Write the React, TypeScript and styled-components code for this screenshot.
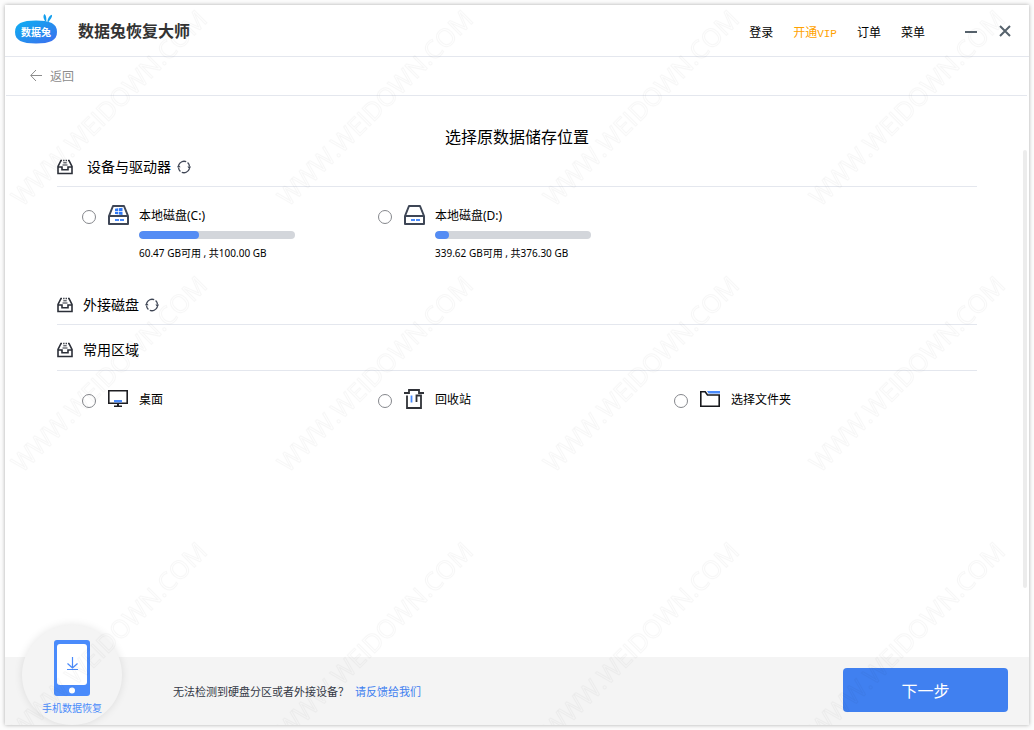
import React from "react";
import styled, { createGlobalStyle } from "styled-components";

const ui = `"Noto Sans", "Noto Sans CJK SC", sans-serif`;
const cjk = `"Noto Sans CJK SC", sans-serif`;
const line = "#e4e7ee";
const blue = "#4a8bfb";

const GlobalStyle = createGlobalStyle`
  *, *::before, *::after { box-sizing: border-box; }
  body { margin: 0; background: #fcfcfc; font-family: ${cjk}; color: #000; }
  h1, h2, p { margin: 0; font-weight: 400; }
  button { font: inherit; border: 0; padding: 0; background: none; color: inherit; cursor: pointer; }
  svg { display: block; flex: none; }
`;

const Page = styled.div`
  display: flex;
  min-height: 100vh;
  padding: 5px;
`;

const Window = styled.div`
  position: relative;
  flex: 1;
  display: flex;
  flex-direction: column;
  overflow: hidden;
  background: #fff;
`;

const Frame = styled.div`
  flex: 1;
  display: flex;
  box-shadow: 0 0 4px rgba(0, 0, 0, 0.32);
`;

const Header = styled.header`
  display: flex;
  align-items: center;
  height: 52px;
  padding: 0 18px 2px 9px;
  border-bottom: 1px solid ${line};
`;

const AppName = styled.h1`
  margin-left: 20px;
  font-size: 16px;
  line-height: 24px;
  font-weight: 700;
  color: #333;
`;

const Menu = styled.nav`
  display: flex;
  gap: 20px;
  margin: 4px 40px 0 auto;
`;

const MenuButton = styled.button<{ $vip?: boolean }>`
  font-size: 12px;
  line-height: 18px;
  color: ${(p) => (p.$vip ? "#ffa200" : "#000")};
`;

const Mono = styled.span`
  font-family: "Liberation Mono", monospace;
  font-size: 11px;
  line-height: 12px;
`;

const WindowControls = styled.div`
  display: flex;
  gap: 22px;
  margin-top: 2px;
`;

const BackBar = styled.div`
  display: flex;
  align-items: center;
  height: 39px;
  margin: 0 2px 0 1px;
  padding-left: 24px;
  border-bottom: 1px solid ${line};
`;

const BackButton = styled.button`
  display: flex;
  align-items: center;
  gap: 8px;
  font-size: 12px;
  line-height: 18px;
  color: #8c8c8c;
`;

const Main = styled.main`
  flex: 1;
  display: flex;
`;

const Content = styled.div`
  flex: 1;
  padding: 30px 46px 0 52px;
`;

const ScrollThumb = styled.div`
  width: 4px;
  margin: 54px 2px 69px 0;
  border-radius: 2px;
  background: #ececec;
`;

const PageTitle = styled.h2`
  padding-bottom: 2px;
  font-size: 16px;
  line-height: 20px;
  text-align: center;
`;

const SectionHead = styled.div<{ $tall?: boolean }>`
  display: flex;
  align-items: center;
  height: ${(p) => (p.$tall ? 46 : 39)}px;
  padding-top: ${(p) => (p.$tall ? 4 : 0)}px;
  border-bottom: 1px solid ${line};
`;

const SectionTitle = styled.h2<{ $gap?: number }>`
  margin: 0 6px 0 ${(p) => p.$gap ?? 10}px;
  padding-bottom: 2px;
  font-size: 14px;
  line-height: 20px;
`;

const Options = styled.div<{ $disks?: boolean }>`
  display: grid;
  grid-template-columns: repeat(3, 1fr);
  align-items: start;
  min-height: ${(p) => (p.$disks ? 99 : 60)}px;
  padding: 18px 7px 0 25px;
`;

const Option = styled.label`
  display: flex;
  cursor: pointer;
`;

const Radio = styled.input`
  appearance: none;
  flex: none;
  width: 14px;
  height: 14px;
  margin: 5px 12px 0 0;
  border: 1px solid #85878c;
  border-radius: 50%;
  background: #fff;
  &:checked { border: 4px solid ${blue}; }
`;

const OptionBody = styled.span`
  display: flex;
  flex-direction: column;
  margin-left: 10px;
`;

const OptionName = styled.span`
  font-family: ${ui};
  font-size: 12px;
  line-height: 22px;
`;

const Bar = styled.span`
  width: 156px;
  height: 8px;
  margin: 4px 0 6px;
  border-radius: 4px;
  overflow: hidden;
  background: #d3d6db;
`;

const BarFill = styled.span`
  display: block;
  height: 8px;
  border-radius: 4px;
  background: #548cf4;
`;

const Usage = styled.span`
  font-family: ${ui};
  font-size: 10px;
  line-height: 16px;
  white-space: nowrap;
`;

const Footer = styled.footer`
  display: flex;
  align-items: center;
  height: 68px;
  padding: 0 21px 0 17px;
  background: #f4f4f4;
`;

const PhoneButton = styled.button`
  display: flex;
  flex-direction: column;
  align-items: center;
  align-self: flex-end;
  gap: 4px;
  width: 100px;
  height: 100px;
  padding-top: 15px;
  border-radius: 50%;
  background: #f4f4f4;
  box-shadow: 0 0 8px rgba(0, 0, 0, 0.1);
  font-size: 10px;
  line-height: 16px;
  color: ${blue};
`;

const Help = styled.p`
  margin-left: 51px;
  font-size: 11px;
  line-height: 16px;
  color: #333845;
`;

const HelpLink = styled.a`
  margin-left: 6px;
  color: #3f80f0;
  text-decoration: none;
`;

const NextButton = styled.button`
  width: 165px;
  height: 44px;
  margin: 0 0 2px auto;
  border-radius: 4px;
  background: #4080f0;
  color: #fff;
  font-size: 16px;
  line-height: 24px;
`;

const WatermarkLayer = styled.svg`
  position: absolute;
  inset: 0;
  width: 100%;
  height: 100%;
  pointer-events: none;
`;

const Logo = () => (
  <svg width="44" height="32" viewBox="0 0 44 32" aria-hidden="true">
    <defs>
      <linearGradient id="logo" x1="0" y1="0" x2="1" y2="1">
        <stop offset="0" stopColor="#0fb0f4" />
        <stop offset="0.5" stopColor="#2390ee" />
        <stop offset="1" stopColor="#3f6cf0" />
      </linearGradient>
    </defs>
    <path d="M31 7C29 4 29 1.500 30.500 0C32.200 1.500 32.500 4 32.300 7ZM33.300 7.500C34 4 35.500 1.500 38 0.800C38.500 3 36.500 5.500 34.500 8Z" fill="#149fee" />
    <path d="M1 18C1 9.500 8 6.500 22 6.500C36 6.500 43 9.500 43 18C43 26.500 36 29.500 22 29.500C8 29.500 1 26.500 1 18Z" fill="url(#logo)" />
    <text x="22" y="22" textAnchor="middle" fontSize="10" fontWeight="700" fontFamily="Noto Sans CJK SC, sans-serif" fill="#fff">数据兔</text>
  </svg>
);

const TrayIcon = () => (
  <svg width="16" height="16" viewBox="0 0 16 16" fill="none" stroke="#2b2f38" strokeWidth="1.600" aria-hidden="true">
    <path d="M5 1.500H4L1 7.500V14.500H15V7.500L12 1.500H11M6.200 1.500H7.500M8.600 1.500H9.900" />
    <path d="M1 8H5V10.800H11V8H15" />
    <path d="M6.300 3.800H9.700M5.500 6H10.500" strokeWidth="1" />
  </svg>
);

const RefreshIcon = () => (
  <svg width="14" height="14" viewBox="0 0 14 14" fill="none" stroke="#3f4655" strokeWidth="1.300" aria-hidden="true">
    <path d="M1.700 5A5.700 5.700 0 0 1 9.200 1.700M10.600 2.600A5.700 5.700 0 0 1 12.500 6.500M12.300 9A5.700 5.700 0 0 1 4.800 12.300M3.400 11.400A5.700 5.700 0 0 1 1.500 7.500" />
    <path d="M0 7.200L1.500 4.400L3.600 7.200ZM10.400 6.500H14L12.500 9.400Z" fill="#3f4655" stroke="none" />
  </svg>
);

const DriveIcon = ({ system }: { system?: boolean }) => (
  <svg width="21" height="20" viewBox="0 0 21 20" aria-hidden="true">
    <path d="M1 11L5 1H16L20 11V19H1ZM1 11H20" fill="none" stroke="#3e4656" strokeWidth="2" strokeLinejoin="round" />
    <path d="M7 14H11V16H7ZM12 14H16V16H12Z" fill={blue} />
    {system && <path d="M7 3.800L10 3.300V6H7ZM10.700 3.200L14.500 2.700V6H10.700ZM7 6.700H10V9.300L7 8.900ZM10.700 6.700H14.500V9.900L10.700 9.400Z" fill="#2f78f5" />}
  </svg>
);

const DesktopIcon = () => (
  <svg width="21" height="20" viewBox="0 0 21 20" aria-hidden="true">
    <path d="M0.800 1.800H19.200V14.200H0.800Z" fill="none" stroke="#1e1e22" strokeWidth="1.600" />
    <path d="M6 11H14V13.400H6Z" fill={blue} />
    <path d="M9 15H11V16.500H14V18H6V16.500H9Z" fill="#1e1e22" />
  </svg>
);

const BinIcon = () => (
  <svg width="21" height="21" viewBox="0 0 21 21" fill="none" strokeWidth="1.800" aria-hidden="true">
    <path d="M0 4H5V1H15V4H20M3 6.500V19H17V6.500H12.500V13" stroke="#303238" />
    <path d="M7.500 6.500V13.500" stroke={blue} />
  </svg>
);

const FolderIcon = () => (
  <svg width="21" height="20" viewBox="0 0 21 20" aria-hidden="true">
    <path d="M0.800 2.800H5.200L7.500 6H19.200V17.200H0.800Z" fill="none" stroke="#17181c" strokeWidth="1.600" />
    <path d="M7 2H20V4.500H8.500Z" fill={blue} />
  </svg>
);

const PhoneIcon = () => (
  <svg width="36" height="56" viewBox="0 0 36 56" aria-hidden="true">
    <rect width="36" height="56" rx="3" fill={blue} />
    <rect x="3" y="4" width="30" height="41" rx="3" fill="#fff" />
    <circle cx="18" cy="50.500" r="3" fill="#fff" />
    <path d="M18.500 17V28M13.500 23.500L18.500 28L23.500 23.500M13 29.500H24" fill="none" stroke={blue} strokeWidth="1.200" />
  </svg>
);

const Watermark = () => (
  <WatermarkLayer aria-hidden="true">
    <defs>
      <pattern id="mark" width="266" height="266" patternUnits="userSpaceOnUse">
        <text
          x="104"
          y="112"
          transform="rotate(-45 104 103)"
          textAnchor="middle"
          fontFamily="Open Sans, sans-serif"
          fontSize="25"
          fill="none"
          stroke="#000"
          strokeOpacity="0.03"
        >
          WWW.WEIDOWN.COM
        </text>
      </pattern>
    </defs>
    <rect width="100%" height="100%" fill="url(#mark)" />
  </WatermarkLayer>
);

const disks = [
  { name: "本地磁盘(C:)", usage: "60.47 GB可用 , 共100.00 GB", used: 60, total: 156, system: true },
  { name: "本地磁盘(D:)", usage: "339.62 GB可用 , 共376.30 GB", used: 14, total: 156, system: false },
];

const places = [
  { name: "桌面", icon: <DesktopIcon /> },
  { name: "回收站", icon: <BinIcon /> },
  { name: "选择文件夹", icon: <FolderIcon /> },
];

export default function App() {
  return (
    <Page>
      <GlobalStyle />
      <Frame>
        <Window>
          <Header>
            <Logo />
            <AppName>数据兔恢复大师</AppName>
            <Menu>
              <MenuButton>登录</MenuButton>
              <MenuButton $vip>开通<Mono>VIP</Mono></MenuButton>
              <MenuButton>订单</MenuButton>
              <MenuButton>菜单</MenuButton>
            </Menu>
            <WindowControls>
              <button aria-label="最小化">
                <svg width="12" height="12" viewBox="0 0 12 12"><path d="M0 7H12" stroke="#56626c" strokeWidth="2" /></svg>
              </button>
              <button aria-label="关闭">
                <svg width="12" height="12" viewBox="0 0 12 12"><path d="M1 1L11 11M11 1L1 11" stroke="#56626c" strokeWidth="2" /></svg>
              </button>
            </WindowControls>
          </Header>
          <BackBar>
            <BackButton>
              <svg width="12" height="12" viewBox="0 0 12 12" fill="none" stroke="#8c8c8c"><path d="M12 5.500H1M6 0L0.700 5.500L6 11" /></svg>
              返回
            </BackButton>
          </BackBar>
          <Main>
            <Content>
              <PageTitle>选择原数据储存位置</PageTitle>
              <SectionHead>
                <TrayIcon />
                <SectionTitle $gap={14}>设备与驱动器</SectionTitle>
                <button aria-label="刷新设备"><RefreshIcon /></button>
              </SectionHead>
              <Options $disks>
                {disks.map((d) => (
                  <Option key={d.name}>
                    <Radio type="radio" name="location" />
                    <DriveIcon system={d.system} />
                    <OptionBody>
                      <OptionName>{d.name}</OptionName>
                      <Bar><BarFill style={{ width: `${(d.used / d.total) * 100}%` }} /></Bar>
                      <Usage>{d.usage}</Usage>
                    </OptionBody>
                  </Option>
                ))}
              </Options>
              <SectionHead>
                <TrayIcon />
                <SectionTitle>外接磁盘</SectionTitle>
                <button aria-label="刷新外接磁盘"><RefreshIcon /></button>
              </SectionHead>
              <SectionHead $tall>
                <TrayIcon />
                <SectionTitle>常用区域</SectionTitle>
              </SectionHead>
              <Options>
                {places.map((p) => (
                  <Option key={p.name}>
                    <Radio type="radio" name="location" />
                    {p.icon}
                    <OptionBody><OptionName>{p.name}</OptionName></OptionBody>
                  </Option>
                ))}
              </Options>
            </Content>
            <ScrollThumb />
          </Main>
          <Footer>
            <PhoneButton>
              <PhoneIcon />
              手机数据恢复
            </PhoneButton>
            <Help>
              无法检测到硬盘分区或者外接设备？
              <HelpLink href="#feedback">请反馈给我们</HelpLink>
            </Help>
            <NextButton>下一步</NextButton>
          </Footer>
          <Watermark />
        </Window>
      </Frame>
    </Page>
  );
}
